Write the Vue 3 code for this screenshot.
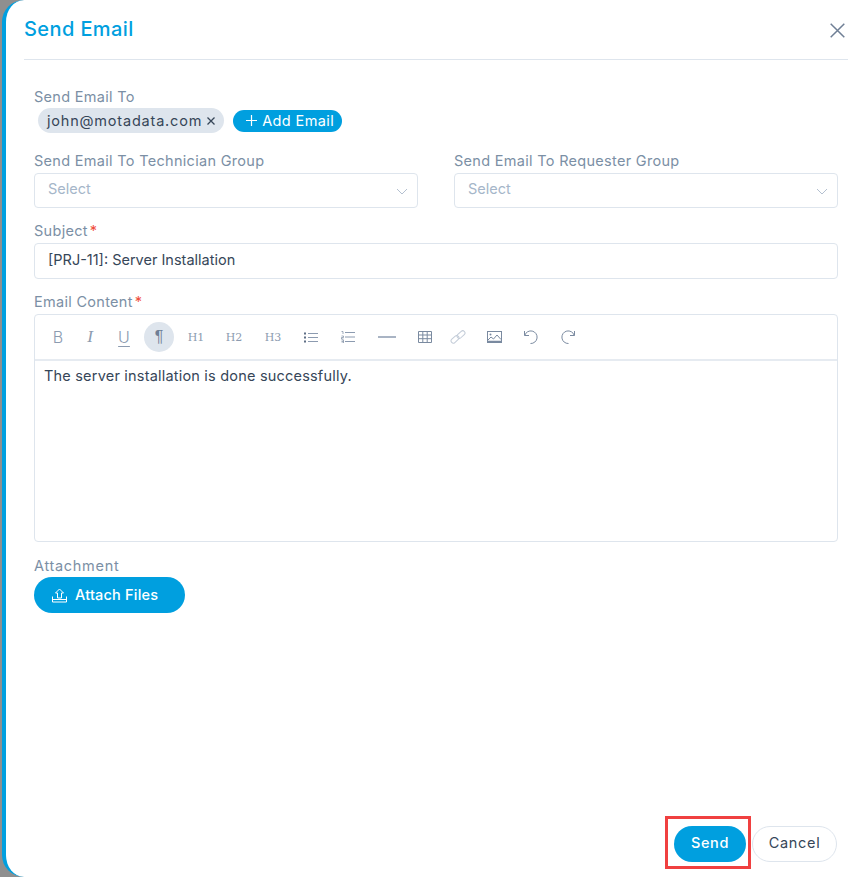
<template>
  <div class="page">
    <div class="drawer">
      <header class="head">
        <h2 class="title">Send Email</h2>
        <button class="close" type="button" aria-label="Close">
          <svg width="15" height="15" viewBox="0 0 15 15"><path d="M.7.7l13.600 13.600M14.300.7L.7 14.300" stroke="#6f7f95" stroke-width="1.5" fill="none" /></svg>
        </button>
      </header>

      <form class="form" @submit.prevent>
        <div class="to">
          <label class="label">Send Email To</label>
          <div class="chips">
            <span class="chip">
              john@motadata.com
              <svg width="8" height="8" viewBox="0 0 8 8"><path d="M.5.5l7 7M7.500.5l-7 7" stroke="#364658" stroke-width="1.3" /></svg>
            </span>
            <button class="add" type="button">
              <svg width="11" height="11" viewBox="0 0 11 11"><path d="M5.500 0v11M0 5.500h11" stroke="#fff" stroke-width="1.2" /></svg>
              Add Email
            </button>
          </div>
        </div>

        <div class="two">
          <div v-for="g in groups" :key="g">
            <label class="label">{{ g }}</label>
            <div class="select">
              <span>Select</span>
              <svg width="12" height="7" viewBox="0 0 12 7"><path d="M1 1l5 5 5-5" stroke="#b4c0d0" fill="none" /></svg>
            </div>
          </div>
        </div>

        <div class="subject">
          <label class="label">Subject<em>*</em></label>
          <input class="input" type="text" value="[PRJ-11]: Server Installation" />
        </div>

        <div class="content">
          <label class="label">Email Content<em>*</em></label>
          <div class="editor">
            <div class="toolbar">
              <span class="tool b">B</span>
              <span class="tool it">I</span>
              <span class="tool un">U</span>
              <span class="tool on">¶</span>
              <span v-for="h in ['H1', 'H2', 'H3']" :key="h" class="tool hd">{{ h }}</span>
              <span class="tool">
                <svg width="14" height="11" viewBox="0 0 14 11"><path d="M4 1.500h10M4 5.500h10M4 9.500h10" stroke="#8c9bb0" /><path d="M0 1.500h2M0 5.500h2M0 9.500h2" stroke="#5f6f86" stroke-width="2" /></svg>
              </span>
              <span class="tool">
                <svg width="14" height="12" viewBox="0 0 14 12"><path d="M4 1.500h10M4 6h10M4 10.500h10" stroke="#8c9bb0" /><path d="M.5.500h1.500v2.500M.5 5h2v1.500H.5V8h2M.5 9h2v3H.5M.5 10.500h2" stroke="#7a8aa0" fill="none" stroke-width=".7" /></svg>
              </span>
              <span class="tool">
                <svg width="18" height="2" viewBox="0 0 18 2"><path d="M0 1h18" stroke="#8c9bb0" stroke-width="1.500" /></svg>
              </span>
              <span class="tool">
                <svg width="14" height="12" viewBox="0 0 14 12"><path d="M.5.500h13v11H.5zM.5 4h13M.5 7.700h13M4.800.5v11M9.200.5v11" stroke="#7a8aa0" fill="none" /></svg>
              </span>
              <span class="tool">
                <svg width="16" height="14" viewBox="0 0 16 14"><g fill="none" stroke="#c3ccd8"><rect x="-4" y="-2" width="9" height="4.500" rx="2.200" transform="translate(4.500 9.500) rotate(-42)" /><rect x="-4.500" y="-2.200" width="9" height="4.500" rx="2.200" transform="translate(11 4.500) rotate(-42)" /></g></svg>
              </span>
              <span class="tool">
                <svg width="15" height="12" viewBox="0 0 15 12"><rect x=".5" y=".5" width="14" height="11" fill="none" stroke="#7a8aa0" /><circle cx="3.500" cy="3.500" r="1" fill="#7a8aa0" /><path d="M1 9l3-3 2.500 2L10 4l4 4.500" stroke="#7a8aa0" fill="none" /><path d="M1 10.500h13" stroke="#7a8aa0" stroke-width="1.500" /></svg>
              </span>
              <span class="tool">
                <svg width="16" height="14" viewBox="0 0 16 14"><path d="M1.500 1v4.500H6M1.800 5.300A6.300 6.300 0 1 1 7.500 13.500" stroke="#7a8aa0" fill="none" /></svg>
              </span>
              <span class="tool">
                <svg width="16" height="14" viewBox="0 0 16 14"><path d="M14.500 1v4.500H10M14.200 5.300A6.300 6.300 0 1 0 8.500 13.500" stroke="#7a8aa0" fill="none" /></svg>
              </span>
            </div>
            <div class="body">The server installation is done successfully.</div>
          </div>
        </div>

        <div class="attach">
          <label class="label wide">Attachment</label>
          <button class="attach-btn" type="button">
            <svg width="15" height="15" viewBox="0 0 15 15"><path d="M7.500 1L3.500 5H5.500V10H9.500V5H11.500ZM.5 8.500V14H14.500V8.500M.5 11.500H14.500" stroke="#fff" fill="none" /></svg>
            Attach Files
          </button>
        </div>
      </form>

      <footer class="foot">
        <div class="send-wrap"><button class="send" type="button">Send</button></div>
        <button class="cancel" type="button">Cancel</button>
      </footer>
    </div>
  </div>
</template>

<script setup>
const groups = ['Send Email To Technician Group', 'Send Email To Requester Group']
</script>

<style>
html, body { margin: 0; background: #fff; }
</style>

<style scoped>
.page {
  width: 864px;
  height: 877px;
  background: #8f8f8f;
  padding-left: 2px;
  box-sizing: border-box;
  font-family: Inter, "Open Sans", sans-serif;
  font-size: 14.5px;
  color: #364658;
}
.drawer {
  width: 862px;
  height: 877px;
  box-sizing: border-box;
  background: #fff;
  border-left: 4px solid #009fdf;
  border-radius: 22px 0 0 22px;
  padding: 0 16px 0 18px;
  display: flex;
  flex-direction: column;
}
.head {
  height: 60px;
  box-sizing: border-box;
  border-bottom: 1px solid #dee5ed;
  display: flex;
  align-items: center;
  justify-content: space-between;
}
.title { margin: -2px 0 0; font-size: 20px; font-weight: 500; letter-spacing: .4px; color: #009fdf; }
.close { background: none; border: 0; padding: 0; margin: 2px 3px 0 0; display: flex; }
.form { padding: 0 10px; flex: 1; }
.to { margin-top: 27px; }
.label { display: block; color: #7b8fa5; line-height: 20px; letter-spacing: .3px; }
.label.wide { letter-spacing: .7px; }
.label em { color: #f04e3e; font-style: normal; margin-left: 2px; }
.chips { display: flex; align-items: center; gap: 9px; margin: 1px 0 0 4px; }
.chip { background: #dee5ed; border-radius: 13px; height: 25px; padding: 0 9px; color: #364658; letter-spacing: .8px; display: flex; align-items: center; gap: 5px; }
.add { background: #009fdf; color: #fff; border: 0; border-radius: 11px; height: 22px; padding: 0 8px 0 13px; font: inherit; letter-spacing: .4px; display: flex; align-items: center; gap: 5px; }
.two { display: grid; grid-template-columns: 384px 384px; gap: 36px; margin-top: 18px; }
.two .select { margin-top: 2px; }
.select { height: 35px; box-sizing: border-box; border: 1px solid #dee5ed; border-radius: 4px; display: flex; align-items: center; justify-content: space-between; padding: 0 9px 0 13px; color: #a5b6c9; }
.select span { margin-bottom: 4px; }
.select svg { margin-top: 2px; }
.subject { margin-top: 13px; }
.input { display: block; width: 100%; box-sizing: border-box; height: 36px; margin-top: 2px; border: 1px solid #dee5ed; border-radius: 4px; padding: 0 13px 4px; font: inherit; color: #364658; }
.content { margin-top: 13px; }
.editor { border: 1px solid #dee5ed; border-radius: 4px; height: 228px; margin-top: 2px; box-sizing: border-box; }
.toolbar { height: 46px; box-sizing: border-box; border-bottom: 2px solid #e6ebf1; display: flex; align-items: center; padding-left: 8px; color: #8c9bb0; }
.tool { width: 30px; height: 30px; flex: none; display: flex; align-items: center; justify-content: center; border-radius: 50%; font-size: 16px; font-weight: 300; }
.tool:nth-child(2) { margin-left: 2px; }
.tool:nth-child(3) { margin-left: 4px; }
.tool:nth-child(4) { margin-left: 5px; }
.tool:nth-child(5), .tool:nth-child(9) { margin-left: 7px; }
.tool:nth-child(6), .tool:nth-child(8), .tool:nth-child(11) { margin-left: 8px; }
.tool:nth-child(7), .tool:nth-child(10) { margin-left: 9px; }
.tool:nth-child(12) { margin-left: 3px; }
.tool:nth-child(13) { margin-left: 6px; }
.tool:nth-child(14), .tool:nth-child(15) { margin-left: 7px; }
.tool.it { font-style: italic; font-family: "Liberation Serif", serif; font-size: 17px; }
.tool.un { text-decoration: underline; text-underline-offset: 3px; text-decoration-thickness: 1px; }
.tool.on { background: #dee5ed; color: #6f7f95; font-family: "Liberation Sans", sans-serif; }
.tool.hd { font-family: "DejaVu Serif", serif; font-size: 11px; }
.body { padding: 5px 9px; line-height: 20px; letter-spacing: .2px; }
.attach { margin-top: 14px; }
.attach-btn { height: 36px; width: 151px; margin-top: 1px; background: #009fdf; color: #fff; border: 0; border-radius: 18px; padding: 0 0 2px 18px; font: inherit; font-weight: 500; letter-spacing: .2px; display: flex; align-items: center; gap: 8px; }
.attach-btn svg { margin-top: 2px; }
.foot { display: flex; justify-content: flex-end; gap: 6px; padding: 0 11px 15px 0; }
.send-wrap { position: relative; }
.send-wrap::after { content: ""; position: absolute; inset: -10px -5px -7px -9px; border: 3px solid #f04040; pointer-events: none; }
.send { width: 72px; height: 36px; background: #009fdf; color: #fff; border: 0; border-radius: 18px; padding: 0 0 4px; font: inherit; font-weight: 500; letter-spacing: .6px; display: block; }
.cancel { width: 85px; height: 36px; background: #fff; color: #364658; border: 1px solid #dee5ed; border-radius: 18px; padding: 0 0 4px; font: inherit; letter-spacing: .7px; }
</style>
